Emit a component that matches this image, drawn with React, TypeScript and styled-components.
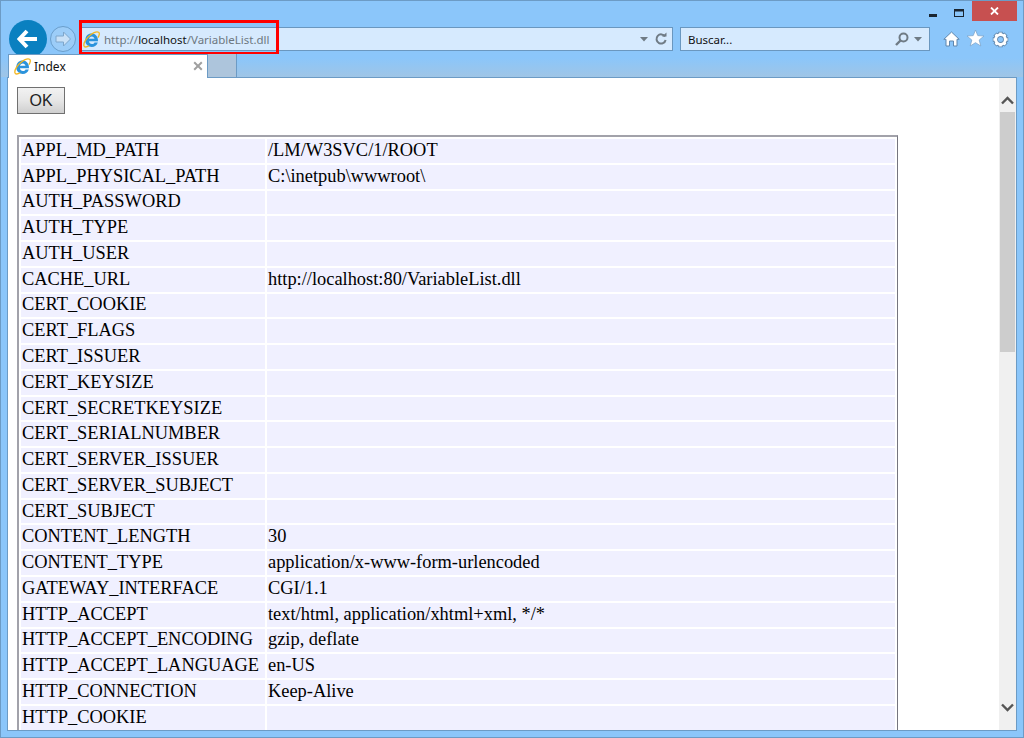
import React from "react";
import styled, { createGlobalStyle } from "styled-components";

const Global = createGlobalStyle`
  html, body { margin: 0; padding: 0; height: 100%; overflow: hidden; }
  * { box-sizing: border-box; }
`;

const UI_FONT = `"Noto Sans", "Open Sans", sans-serif`;

const Window = styled.div`
  width: 1024px;
  height: 738px;
  border: 1px solid #6c9bc5;
  background: #8bc6fa;
  padding: 0 6px 6px 6px;
  display: flex;
  flex-direction: column;
  overflow: hidden;
`;
const TitleBar = styled.div`
  height: 20px;
  display: flex;
  justify-content: flex-end;
  align-items: flex-start;
  margin-right: -6px;
  padding-right: 6px;
  flex: none;
`;
const WinButton = styled.div<{ $w: number; $close?: boolean }>`
  width: ${(p) => p.$w}px;
  height: 20px;
  display: flex;
  align-items: center;
  justify-content: center;
  background: ${(p) => (p.$close ? "#c75050" : "transparent")};
`;
const Toolbar = styled.div`
  height: 33px;
  flex: none;
  display: flex;
  align-items: flex-start;
  padding: 6px 0 0 2px;
  position: relative;
`;
const BackButton = styled.div`
  width: 38px;
  height: 38px;
  margin-top: -7px;
  border-radius: 50%;
  background: #0a80c0;
  display: flex;
  align-items: center;
  justify-content: center;
  flex: none;
`;
const ForwardButton = styled.div`
  width: 26px;
  height: 26px;
  margin: -1px 4px 0 3px;
  border-radius: 50%;
  border: 1px solid #6a9ecb;
  background: #9ccdf8;
  display: flex;
  align-items: center;
  justify-content: center;
  flex: none;
`;
const Field = styled.div<{ $w: number }>`
  width: ${(p) => p.$w}px;
  height: 24px;
  background: #d6eafe;
  border: 1px solid #6a97bf;
  display: flex;
  align-items: center;
  font: 11.5px ${UI_FONT};
  flex: none;
`;
const AddressField = styled(Field)`
  padding: 0 4px 0 2px;
  margin-right: 7px;
`;
const SearchField = styled(Field)`
  padding: 0 7px 0 7px;
  color: #111;
  margin-right: 13px;
`;
const Url = styled.span`
  color: #6d7780;
  margin-left: 4px;
  white-space: nowrap;
`;
const Host = styled.span`
  color: #111;
`;
const Grow = styled.div`
  flex: 1;
`;
const RedBox = styled.div`
  position: absolute;
  left: 72px;
  top: -1px;
  width: 200px;
  height: 35px;
  border: 3px solid #f00;
  pointer-events: none;
`;
const ToolIcons = styled.div`
  display: flex;
  gap: 5px;
  align-items: center;
  height: 24px;
`;
const TabStrip = styled.div`
  height: 23px;
  flex: none;
  display: flex;
  margin: 0 -6px;
  padding: 0 6px 0 7px;
  background: linear-gradient(#8bc6fa 0, #8bc6fa 4px, #9fc5e6 100%);
  position: relative;
  z-index: 1;
`;
const Tab = styled.div`
  width: 200px;
  height: 24px;
  background: #fff;
  border: 1px solid #6c9bc5;
  border-bottom: none;
  display: flex;
  align-items: center;
  padding: 0 4px 1px 5px;
  gap: 3px;
  font: 12px ${UI_FONT};
  color: #111;
`;
const TabStub = styled.div`
  width: 29px;
  height: 23px;
  background: #adc5dc;
  border-right: 1px solid #6c9bc5;
`;
const Content = styled.div`
  flex: 1;
  min-height: 0;
  border: 1px solid #6c9bc5;
  background: #fff;
  display: flex;
  overflow: hidden;
`;
const Page = styled.div`
  flex: 1;
  min-width: 0;
  padding: 9px 0 0 9px;
  overflow: hidden;
`;
const OkButton = styled.button`
  display: block;
  width: 48px;
  height: 27px;
  padding: 0;
  border: 1px solid #707070;
  border-radius: 0;
  background: linear-gradient(#f2f2f2, #e6e6e6 50%, #cfcfcf);
  font: 16px "Liberation Sans", Arial, sans-serif;
  color: #222;
  margin-bottom: 21px;
`;
const VarTable = styled.table`
  width: 881px;
  border-style: solid;
  border-width: 2px 1px 1px 2px;
  border-color: #a2a2aa #75757f #75757f #a2a2aa;
  border-spacing: 2px;
  border-collapse: separate;
  table-layout: fixed;
  font: 18.4px "Liberation Serif", "Times New Roman", serif;
  color: #000;
`;
const NameCell = styled.td`
  width: 244px;
  height: 23.77px;
  padding: 0 1px 1px;
  background: #f0f0ff;
  white-space: nowrap;
`;
const ValueCell = styled.td`
  height: 23.77px;
  padding: 0 1px 1px;
  background: #f0f0ff;
  white-space: nowrap;
`;
const Scrollbar = styled.div`
  width: 17px;
  flex: none;
  background: #f0f0f0;
  display: flex;
  flex-direction: column;
  align-items: center;
`;
const ScrollArrow = styled.div<{ $h: number; $end?: boolean }>`
  height: ${(p) => p.$h}px;
  width: 100%;
  display: flex;
  justify-content: center;
  align-items: ${(p) => (p.$end ? "flex-start" : "flex-end")};
  flex: none;
`;
const Thumb = styled.div`
  width: 15px;
  height: 240px;
  background: #cdcdcd;
  flex: none;
  margin-top: 6px;
`;

const IELogo = () => (
  <svg width="17" height="17" viewBox="0 0 17 17" style={{ flex: "none" }}>
    <path
      d="M2.4 8 C3 4.4 5.8 2.6 8.6 2.6 C12.6 2.6 15.2 5.8 15 10.2 H6 C6.1 12 7.4 13 8.9 13 C10.2 13 11.1 12.5 11.5 11.5 H14.8 C13.9 14.4 11.6 16 8.8 16 C5 16 2.2 13.2 2.2 9.6 C2.2 9 2.3 8.5 2.4 8Z M6 7.8 H11.5 C11.3 6.3 10.2 5.4 8.8 5.4 C7.4 5.4 6.2 6.3 6 7.8Z"
      fill="#2b93dc"
      fillRule="evenodd"
    />
    <path
      d="M14.9 6.6 C16.4 4.2 16.8 2 15.6 1.3 C14 0.4 10.6 1.6 7.4 4 C3.4 7 0.4 11.8 0.9 14.6 C1.2 16.5 3.6 16.3 6.2 14.8"
      fill="none"
      stroke="#f3b61f"
      strokeWidth="1.3"
    />
  </svg>
);

const Caret = () => (
  <svg width="8" height="5" viewBox="0 0 8 5" style={{ flex: "none" }}>
    <path d="M0 0H8L4 4.5Z" fill="#6f7b85" />
  </svg>
);

const rows: [string, string][] = [
  ["APPL_MD_PATH", "/LM/W3SVC/1/ROOT"],
  ["APPL_PHYSICAL_PATH", "C:\\inetpub\\wwwroot\\"],
  ["AUTH_PASSWORD", ""],
  ["AUTH_TYPE", ""],
  ["AUTH_USER", ""],
  ["CACHE_URL", "http://localhost:80/VariableList.dll"],
  ["CERT_COOKIE", ""],
  ["CERT_FLAGS", ""],
  ["CERT_ISSUER", ""],
  ["CERT_KEYSIZE", ""],
  ["CERT_SECRETKEYSIZE", ""],
  ["CERT_SERIALNUMBER", ""],
  ["CERT_SERVER_ISSUER", ""],
  ["CERT_SERVER_SUBJECT", ""],
  ["CERT_SUBJECT", ""],
  ["CONTENT_LENGTH", "30"],
  ["CONTENT_TYPE", "application/x-www-form-urlencoded"],
  ["GATEWAY_INTERFACE", "CGI/1.1"],
  ["HTTP_ACCEPT", "text/html, application/xhtml+xml, */*"],
  ["HTTP_ACCEPT_ENCODING", "gzip, deflate"],
  ["HTTP_ACCEPT_LANGUAGE", "en-US"],
  ["HTTP_CONNECTION", "Keep-Alive"],
  ["HTTP_COOKIE", ""],
];

export default function App() {
  return (
    <>
      <Global />
      <Window>
        <TitleBar>
          <WinButton $w={26}>
            <svg width="10" height="3" viewBox="0 0 10 3" style={{ marginTop: 8 }}>
              <rect width="8" height="3" x="1" fill="#1a2530" />
            </svg>
          </WinButton>
          <WinButton $w={26}>
            <svg width="10" height="8" viewBox="0 0 10 8" style={{ marginTop: 3 }}>
              <rect x="0.5" y="0.5" width="9" height="7" fill="none" stroke="#1a2530" />
              <rect x="0" y="0" width="10" height="2.5" fill="#1a2530" />
            </svg>
          </WinButton>
          <WinButton $w={45} $close>
            <svg width="9" height="8" viewBox="0 0 9 8">
              <path d="M1 0.5 L8 7.5 M8 0.5 L1 7.5" stroke="#fff" strokeWidth="1.8" />
            </svg>
          </WinButton>
        </TitleBar>
        <Toolbar>
          <BackButton>
            <svg width="22" height="20" viewBox="0 0 22 20">
              <path d="M10 2 L2.5 10 L10 18 M3 10 H20" fill="none" stroke="#fff" strokeWidth="4" />
            </svg>
          </BackButton>
          <ForwardButton>
            <svg width="18" height="16" viewBox="0 0 18 16">
              <path d="M9.5 1 L16.5 8 L9.5 15 V11 H2 V5 H9.5Z" fill="#c9e1f7" stroke="#7ea6cb" strokeWidth="1" />
            </svg>
          </ForwardButton>
          <AddressField $w={593}>
            <IELogo />
            <Url>
              http://<Host>localhost</Host>/VariableList.dll
            </Url>
            <Grow />
            <Caret />
            <svg width="14" height="14" viewBox="0 0 14 14" style={{ marginLeft: 6 }}>
              <path d="M11 4.5 A4.6 4.6 0 1 0 11.6 8" fill="none" stroke="#6f7b85" strokeWidth="2" />
              <path d="M8 4.5 H12.5 V0.5Z" fill="#6f7b85" />
            </svg>
          </AddressField>
          <SearchField $w={250}>
            Buscar...
            <Grow />
            <svg width="14" height="14" viewBox="0 0 14 14">
              <circle cx="8.5" cy="5.5" r="4" fill="none" stroke="#6f7b85" strokeWidth="2" />
              <path d="M5.5 8.5 L1 13" stroke="#6f7b85" strokeWidth="2.4" />
            </svg>
            <span style={{ width: 5 }} />
            <Caret />
          </SearchField>
          <ToolIcons>
            <svg width="17" height="16" viewBox="0 0 17 16">
              <path d="M8.5 1 L16.2 8.3 L14 8.3 V15 H10.5 V10 H6.5 V15 H3 V8.3 L0.8 8.3Z" fill="#fff" stroke="#5f86ad" strokeWidth="1" />
            </svg>
            <svg width="19" height="18" viewBox="0 0 19 18" style={{ margin: "-2px 0 0 1px" }}>
              <path d="M9.5 1 L11.8 6.6 L18 7 L13.2 11 L14.8 17 L9.5 13.7 L4.2 17 L5.8 11 L1 7 L7.2 6.6Z" fill="#fff" stroke="#7ea6cb" strokeWidth="0.8" />
            </svg>
            <svg width="17" height="17" viewBox="0 0 17 17" style={{ marginLeft: 2 }}>
              <path d="M8.5 0.8 V16.2 M0.8 8.5 H16.2 M3 3 L14 14 M14 3 L3 14" stroke="#5f86ad" strokeWidth="4.4" strokeDasharray="3.4 9.4" />
              <circle cx="8.5" cy="8.5" r="4.8" fill="none" stroke="#5f86ad" strokeWidth="4.6" />
              <circle cx="8.5" cy="8.5" r="4.8" fill="none" stroke="#fff" strokeWidth="2.8" />
              <path d="M8.5 1.4 V15.6 M1.4 8.5 H15.6 M3.5 3.5 L13.5 13.5 M13.5 3.5 L3.5 13.5" stroke="#fff" strokeWidth="2.6" strokeDasharray="2.4 9.4" />
            </svg>
          </ToolIcons>
          <RedBox />
        </Toolbar>
        <TabStrip>
          <Tab>
            <IELogo />
            Index
            <Grow />
            <svg width="10" height="10" viewBox="0 0 10 10">
              <path d="M1.2 1.2 L8.8 8.8 M8.8 1.2 L1.2 8.8" stroke="#a0a0a0" strokeWidth="2" />
            </svg>
          </Tab>
          <TabStub />
        </TabStrip>
        <Content>
          <Page>
            <OkButton>OK</OkButton>
            <VarTable>
              <tbody>
                {rows.map(([k, v]) => (
                  <tr key={k}>
                    <NameCell>{k}</NameCell>
                    <ValueCell>{v}</ValueCell>
                  </tr>
                ))}
              </tbody>
            </VarTable>
          </Page>
          <Scrollbar>
            <ScrollArrow $h={28}>
              <svg width="13" height="9" viewBox="0 0 13 9" style={{ marginBottom: 1 }}>
                <path d="M1 7.5 L6.5 2 L12 7.5" fill="none" stroke="#555" strokeWidth="2.4" />
              </svg>
            </ScrollArrow>
            <Thumb />
            <Grow />
            <ScrollArrow $h={27} $end>
              <svg width="13" height="9" viewBox="0 0 13 9">
                <path d="M1 1.5 L6.5 7 L12 1.5" fill="none" stroke="#555" strokeWidth="2.4" />
              </svg>
            </ScrollArrow>
          </Scrollbar>
        </Content>
      </Window>
    </>
  );
}
